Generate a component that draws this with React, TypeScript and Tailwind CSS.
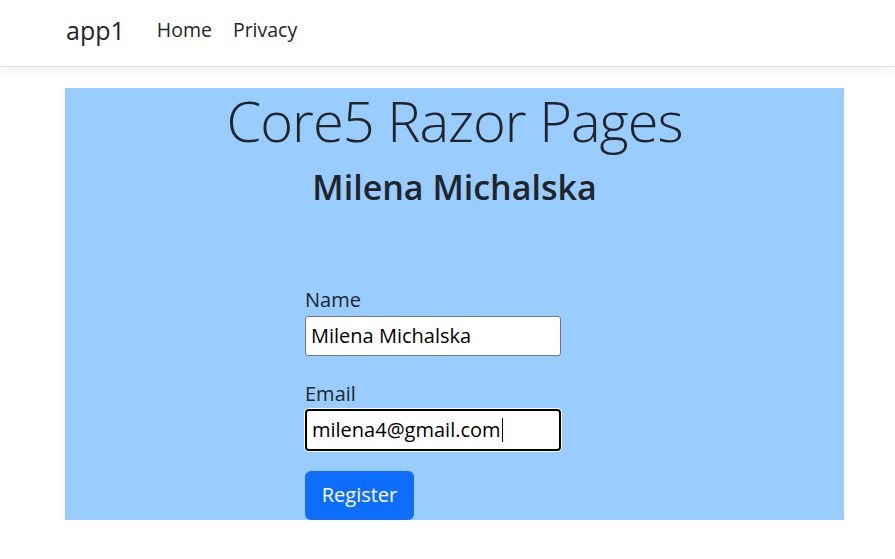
export default function App() {
  return (
    <div className="min-h-screen bg-white text-[#212529] font-['Open_Sans','Noto_Sans',sans-serif]">
      {/* navbar */}
      <header className="h-[67px] border-b border-[#dee2e6] bg-white shadow-[0_5px_15px_rgba(0,0,0,0.05)]">
        <nav className="flex h-full items-center pl-[66px] pb-[6px]">
          <a className="text-[25px] leading-none text-[#212529] mr-[32px]">app1</a>
          <ul className="flex items-center gap-[21px] text-[19.5px] text-[#212529]">
            <li>Home</li>
            <li>Privacy</li>
          </ul>
        </nav>
      </header>

      <main className="pt-[21px] pl-[65px]">
        <div className="w-[779px] h-[432px] bg-[#99ccff] flex flex-col items-center">
          <h1 className="text-[56px] font-light leading-[1.2] tracking-[-1px] mt-[-1px]">Core5 Razor Pages</h1>
          <h2 className="text-[34px] font-semibold leading-[1.2] mt-[13px]">Milena Michalska</h2>

          <form className="self-start ml-[240px] mt-[78px] flex flex-col text-[20px]">
            <label className="leading-[28px]">Name</label>
            <input
              type="text"
              defaultValue="Milena Michalska"
              className="w-[256px] h-[40px] mt-[2px] px-[5px] border border-[#767676] rounded-[3px] bg-white text-black outline-none"
            />

            <label className="leading-[28px] mt-[24px]">Email</label>
            <div className="w-[256px] h-[42px] mt-[1px] px-[5px] flex items-center rounded-[4px] bg-white text-black border-2 border-black ring-1 ring-white">
              <span>milena4@gmail.com</span>
              <span className="w-px h-[24px] bg-black ml-px" />
            </div>

            <button
              type="button"
              className="mt-[20px] w-[109px] h-[49px] rounded-[6px] bg-[#0d6efd] text-white"
            >
              Register
            </button>
          </form>
        </div>
      </main>
    </div>
  );
}
